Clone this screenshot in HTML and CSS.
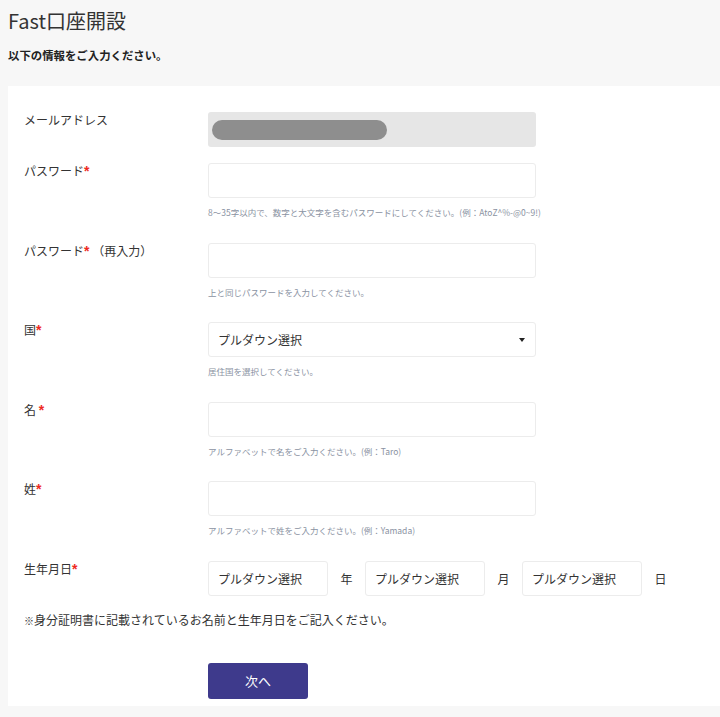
FILE: index.html
```html
<!DOCTYPE html>
<html lang="ja">
<head>
<meta charset="utf-8">
<title>Fast口座開設</title>
<link rel="stylesheet" href="styles.css">
</head>
<body>
<div class="page">
  <h1 class="title">Fast口座開設</h1>
  <p class="lead">以下の情報をご入力ください。</p>
  <form class="card">
    <div class="row row-email">
      <div class="label">メールアドレス</div>
      <div class="field">
        <div class="email-box"><span class="pill"></span></div>
      </div>
    </div>
    <div class="row">
      <div class="label">パスワード<span class="req">*</span></div>
      <div class="field">
        <div class="input"></div>
        <div class="hint">8〜35字以内で、数字と大文字を含むパスワードにしてください。(例：AtoZ^%-@0~9!)</div>
      </div>
    </div>
    <div class="row">
      <div class="label">パスワード<span class="req">*</span> （再入力）</div>
      <div class="field">
        <div class="input"></div>
        <div class="hint">上と同じパスワードを入力してください。</div>
      </div>
    </div>
    <div class="row">
      <div class="label">国<span class="req">*</span></div>
      <div class="field">
        <div class="input select"><span>プルダウン選択</span><span class="caret"></span></div>
        <div class="hint">居住国を選択してください。</div>
      </div>
    </div>
    <div class="row">
      <div class="label">名 <span class="req">*</span></div>
      <div class="field">
        <div class="input"></div>
        <div class="hint">アルファベットで名をご入力ください。(例：Taro)</div>
      </div>
    </div>
    <div class="row">
      <div class="label">姓<span class="req">*</span></div>
      <div class="field">
        <div class="input"></div>
        <div class="hint">アルファベットで姓をご入力ください。(例：Yamada)</div>
      </div>
    </div>
    <div class="row row-date">
      <div class="label">生年月日<span class="req">*</span></div>
      <div class="field date">
        <div class="input small"><span>プルダウン選択</span></div>
        <span class="unit">年</span>
        <div class="input small"><span>プルダウン選択</span></div>
        <span class="unit">月</span>
        <div class="input small"><span>プルダウン選択</span></div>
        <span class="unit">日</span>
      </div>
    </div>
    <p class="note"><span class="kome">※</span>身分証明書に記載されているお名前と生年月日をご記入ください。</p>
    <div class="actions">
      <button type="button" class="btn">次へ</button>
    </div>
  </form>
</div>
</body>
</html>
```

FILE: styles.css
```css
html, body {
  margin: 0;
  padding: 0;
  background: #f7f7f7;
}
body {
  font-family: "Noto Sans CJK JP", "Noto Sans", "Liberation Sans", sans-serif;
  color: #333;
}
.page {
  padding-left: 8px;
  overflow: hidden;
}
.title {
  margin: 0;
  padding-top: 9px;
  font-size: 20px;
  line-height: 24px;
  font-weight: 400;
  color: #333;
}
.lead {
  margin: 14px 0 0;
  font-size: 11.4px;
  line-height: 16px;
  font-weight: 700;
  color: #222;
}
.card {
  margin-top: 23px;
  background: #fff;
  padding: 26px 0 7px 16px;
}
.row {
  display: flex;
  margin-bottom: 23.5px;
}
.row-email {
  margin-bottom: 16px;
}
.row-date {
  margin-bottom: 16px;
}
.label {
  width: 184px;
  flex: none;
  font-size: 12px;
  line-height: 16px;
  color: #333;
}
.req {
  color: #ee2a1f;
  font-family: "Liberation Sans", sans-serif;
  font-weight: 700;
  font-size: 14px;
}
.field {
  width: 328px;
}
.email-box {
  height: 35px;
  background: #e6e6e6;
  border-radius: 3px;
  display: flex;
  align-items: center;
  padding-left: 4px;
}
.pill {
  width: 175px;
  height: 20px;
  border-radius: 10px;
  background: #8e8e8e;
}
.input {
  height: 35px;
  box-sizing: border-box;
  border: 1px solid #ececec;
  border-radius: 3px;
  background: #fff;
  display: flex;
  align-items: center;
  padding: 0 9px;
  font-size: 12px;
  color: #333;
}
.select {
  justify-content: space-between;
}
.caret {
  width: 0;
  height: 0;
  border-left: 3px solid transparent;
  border-right: 3px solid transparent;
  border-top: 4px solid #222;
  margin-right: 1px;
}
.hint {
  margin-top: 7px;
  font-size: 8.5px;
  line-height: 14px;
  color: #8a92a2;
  white-space: nowrap;
}
.date {
  display: flex;
  align-items: center;
  width: auto;
}
.small {
  width: 120px;
}
.unit {
  font-size: 12px;
  margin: 0 12.5px;
  color: #333;
}
.note {
  margin: 0;
  font-size: 12px;
  line-height: 16px;
  color: #333;
}
.kome {
  font-size: 10px;
}
.actions {
  padding-left: 184px;
  margin-top: 34px;
}
.btn {
  display: block;
  width: 100px;
  height: 36px;
  border: none;
  border-radius: 3px;
  background: #3e3a8c;
  color: #fff;
  font-family: "Noto Sans CJK JP", sans-serif;
  font-size: 13px;
  padding: 0;
  cursor: pointer;
}
```
